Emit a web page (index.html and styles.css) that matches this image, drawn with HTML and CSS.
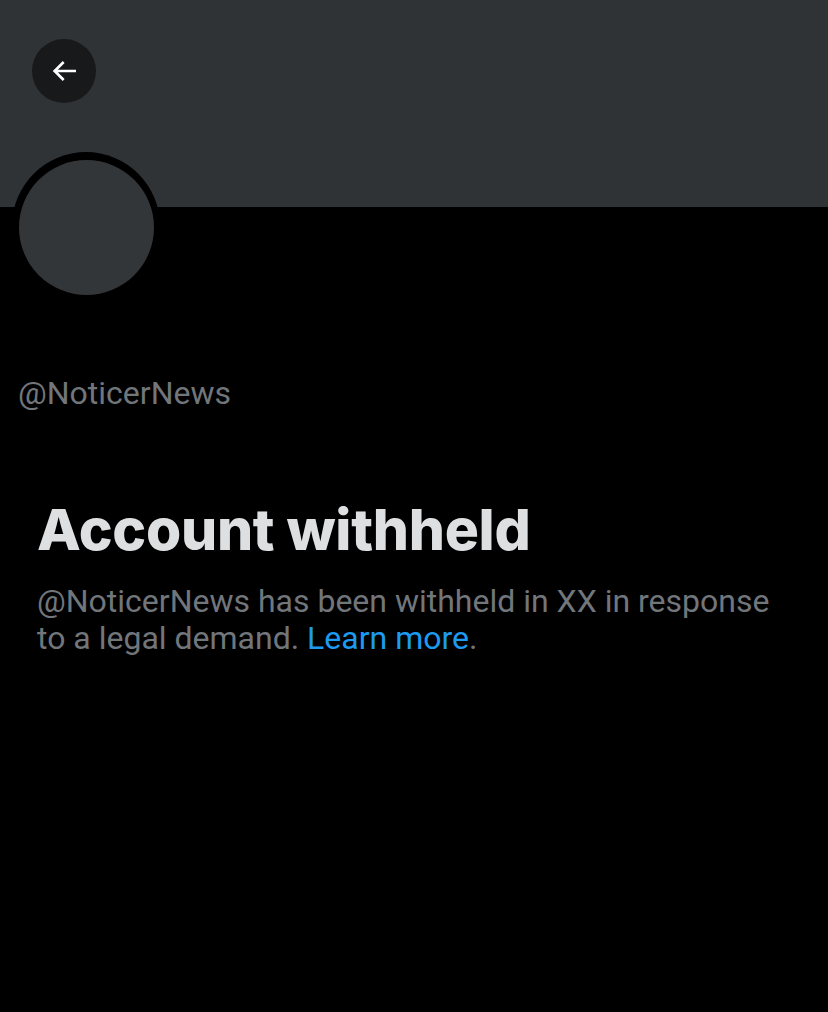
FILE: index.html
```html
<!DOCTYPE html>
<html>
<head>
<meta charset="utf-8">
<link rel="stylesheet" href="styles.css">
</head>
<body>
<div class="page">
  <header class="banner">
    <button class="back" aria-label="Back">
      <svg viewBox="0 0 24 24" width="32" height="32"><path d="M7.414 13l5.043 5.04-1.414 1.42L3.586 12l7.457-7.46 1.414 1.42L7.414 11H21v2H7.414z" fill="#fff"/></svg>
    </button>
  </header>
  <div class="profile">
    <div class="avatar-wrap"><div class="avatar"></div></div>
    <div class="handle">@NoticerNews</div>
  </div>
  <section class="notice">
    <h1 class="title">Account withheld</h1>
    <p class="desc">@NoticerNews has been withheld in XX in response to a legal demand. <a class="link" href="#">Learn more</a>.</p>
  </section>
</div>
</body>
</html>
```
FILE: styles.css
```css
* { box-sizing: border-box; }
html, body { margin: 0; padding: 0; background: #000; }
body { font-family: Roboto, "Liberation Sans", sans-serif; }
.page { width: 828px; height: 1012px; background: #000; overflow: hidden; }
.banner {
  height: 207px;
  background: #2f3336;
  padding: 39px 0 0 32px;
}
.back {
  width: 64px; height: 64px;
  border-radius: 50%;
  border: none;
  background: #17191b;
  display: flex; align-items: center; justify-content: center;
  padding: 0;
}
.profile { padding: 0 0 0 12px; }
.avatar-wrap {
  position: relative;
  margin-top: -55px;
  width: 148px; height: 148px;
  border-radius: 50%;
  background: #000;
  padding: 7px;
}
.avatar {
  width: 135px; height: 135px;
  margin-top: 1px;
  border-radius: 50%;
  background: #333638;
}
.handle {
  margin-top: 75px;
  margin-left: 6px;
  font-size: 32px;
  line-height: 36px;
  color: #71767b;
}
.notice { padding: 84px 40px 0 37px; }
.title {
  margin: 0;
  font-family: Inter, "Liberation Sans", sans-serif;
  font-weight: 800;
  font-size: 57px;
  line-height: 70px;
  letter-spacing: -0.3px;
  color: #dedfe0;
}
.desc {
  margin: 18px 0 0;
  font-size: 32px;
  line-height: 37px;
  color: #71767b;
  max-width: 750px;
}
.link { color: #1d9bf0; text-decoration: none; }
```
